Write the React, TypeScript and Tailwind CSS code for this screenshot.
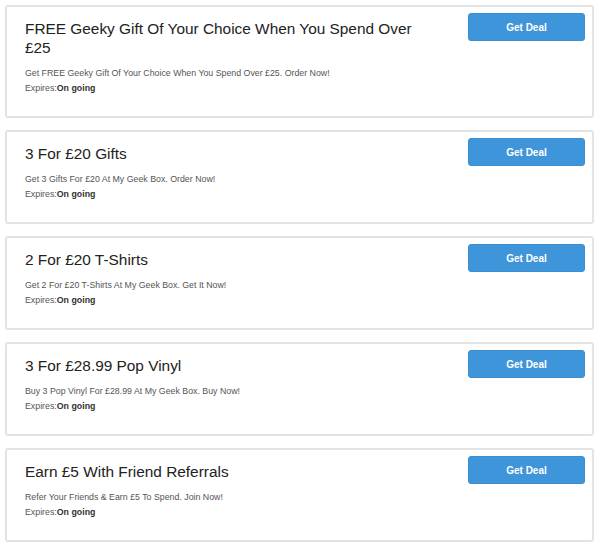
type Deal = {
  title: string;
  description: string;
};

const deals: Deal[] = [
  {
    title: "FREE Geeky Gift Of Your Choice When You Spend Over £25",
    description:
      "Get FREE Geeky Gift Of Your Choice When You Spend Over £25. Order Now!",
  },
  {
    title: "3 For £20 Gifts",
    description: "Get 3 Gifts For £20 At My Geek Box. Order Now!",
  },
  {
    title: "2 For £20 T-Shirts",
    description: "Get 2 For £20 T-Shirts At My Geek Box. Get It Now!",
  },
  {
    title: "3 For £28.99 Pop Vinyl",
    description: "Buy 3 Pop Vinyl For £28.99 At My Geek Box. Buy Now!",
  },
  {
    title: "Earn £5 With Friend Referrals",
    description: "Refer Your Friends & Earn £5 To Spend. Join Now!",
  },
];

function DealCard({ deal }: { deal: Deal }) {
  return (
    <div className="flex items-start rounded-[3px] border-2 border-[#e4e4e4] bg-white pl-[18px] pr-[7px]">
      <div className="flex-1 pt-[12px] pb-[20px]">
        <h3 className="max-w-[400px] text-[15.4px] leading-[19px] text-[#222]">
          {deal.title}
        </h3>
        <p className="mt-[9px] text-[8.8px] leading-[15px] text-[#555]">
          {deal.description}
        </p>
        <p className="text-[8.8px] leading-[15px] text-[#555]">
          Expires:<span className="font-bold text-[#333]">On going</span>
        </p>
      </div>
      <button
        type="button"
        className="mt-[6px] h-[28px] w-[117px] rounded-[3px] border border-[#3a8ed2] bg-[#3f95d9] text-[10px] font-bold text-white"
      >
        Get Deal
      </button>
    </div>
  );
}

export default function App() {
  return (
    <div
      className="flex min-h-[551px] flex-col gap-[12px] bg-white pt-[5px] pl-[5px] pr-[6px]"
      style={{ fontFamily: '"Liberation Sans", Arial, sans-serif' }}
    >
      {deals.map((deal) => (
        <DealCard key={deal.title} deal={deal} />
      ))}
    </div>
  );
}
